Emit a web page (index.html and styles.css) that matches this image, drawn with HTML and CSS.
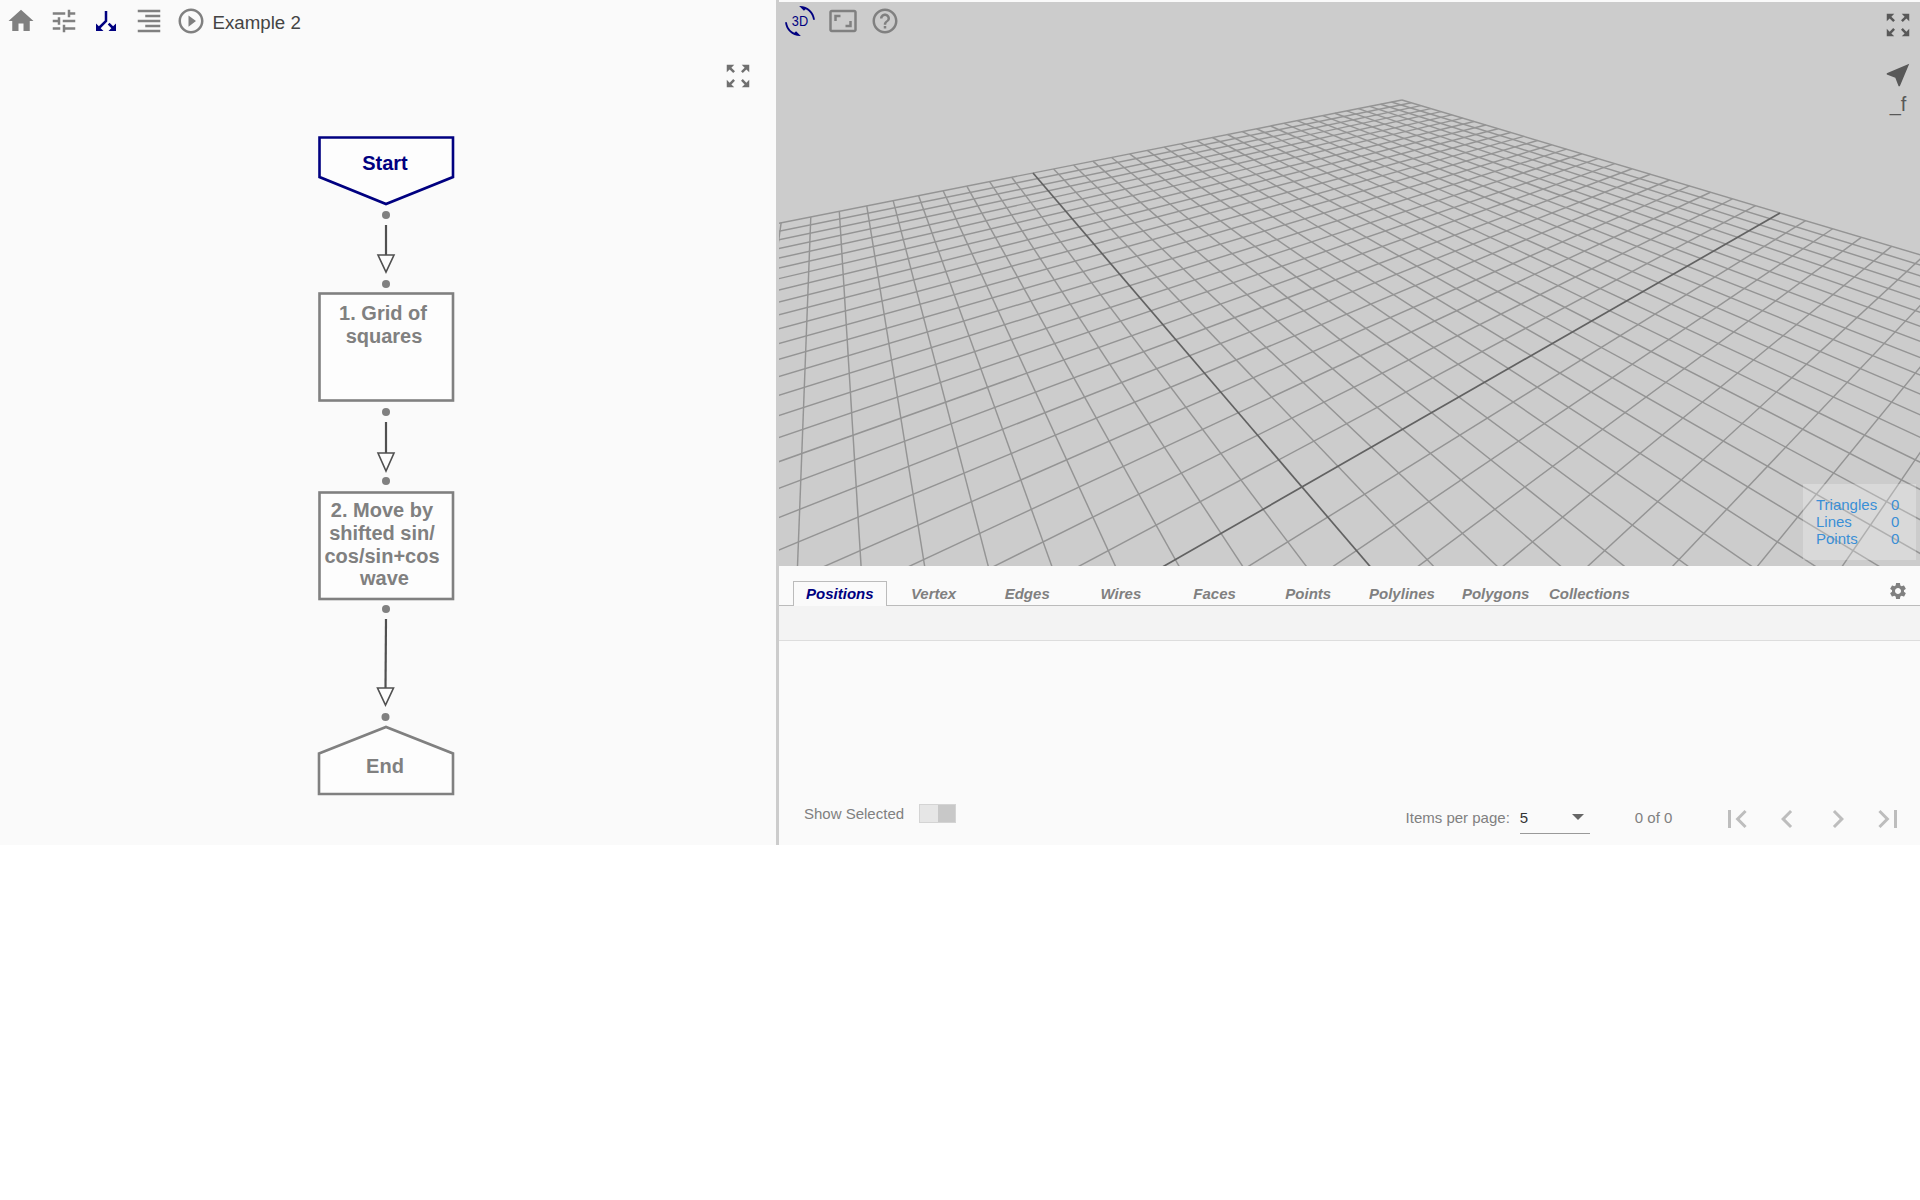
FILE: index.html
```html
<!DOCTYPE html>
<html lang="en">
<head>
<meta charset="utf-8">
<title>Example 2</title>
<link rel="stylesheet" href="styles.css">
</head>
<body>
<div class="app">
  <section class="flow-panel">
    <header class="toolbar">
      <span class="tool"><svg class="icon-30 grey" viewBox="0 0 24 24"><path d="M10 20v-6h4v6h5v-8h3L12 3 2 12h3v8z"/></svg></span>
      <span class="tool"><svg class="icon-30 grey" viewBox="0 0 24 24"><path d="M3 17v2h6v-2H3zM3 5v2h10V5H3zm10 16v-2h8v-2h-8v-2h-2v6h2zM7 9v2H3v2h4v2h2V9H7zm14 4v-2H11v2h10zm-6-4h2V7h4V5h-4V3h-2v6z"/></svg></span>
      <span class="tool"><svg class="icon-30 navy" viewBox="0 0 24 24"><path transform="matrix(1 0 0 -1 0 24)" d="M14 4l2.29 2.29-2.88 2.88 1.42 1.42 2.88-2.88L20 10V4zm-4 0H4v6l2.29-2.29 4.71 4.7V20h2v-8.41l-5.29-5.3z"/></svg></span>
      <span class="tool"><svg class="icon-30 grey" viewBox="0 0 24 24"><path d="M3 21h18v-2H3v2zm6-4h12v-2H9v2zm-6-4h18v-2H3v2zm6-4h12V7H9v2zM3 3v2h18V3H3z"/></svg></span>
      <span class="tool"><svg class="icon-30 grey" viewBox="0 0 24 24"><path d="M10 16.5l6-4.5-6-4.5v9zM12 2C6.48 2 2 6.48 2 12s4.48 10 10 10 10-4.48 10-10S17.52 2 12 2zm0 18c-4.41 0-8-3.59-8-8s3.59-8 8-8 8 3.59 8 8-3.59 8-8 8z"/></svg></span>
      <span class="title">Example 2</span>
    </header>
    <svg class="icon-30 grey flow-expand" viewBox="0 0 24 24"><path d="M15 3l2.3 2.3-2.89 2.87 1.42 1.42L18.7 6.7 21 9V3h-6zM3 9l2.3-2.3 2.87 2.89 1.42-1.42L6.7 5.3 9 3H3v6zm6 12l-2.3-2.3 2.89-2.87-1.42-1.42L5.3 17.3 3 15v6h6zm12-6l-2.3 2.3-2.87-2.89-1.42 1.42 2.89 2.87L15 21h6v-6z"/></svg>
    <svg class="flow" viewBox="0 0 776 845" width="776" height="845">
      <polygon class="node active" points="319.5,137.5 453,137.5 453,177 386,204 319.5,177"/>
      <text class="label active-label" x="385" y="170">Start</text>
      <circle class="dot" cx="386" cy="215" r="4"/>
      <line class="edge" x1="386" y1="225" x2="386" y2="256"/>
      <polygon class="head" points="378,255 394,255 386,272"/>
      <circle class="dot" cx="386" cy="284" r="4"/>

      <rect class="node" x="319.5" y="293.5" width="133.5" height="107"/>
      <text class="label" x="383" y="320">1. Grid of</text>
      <text class="label" x="384" y="343">squares</text>
      <circle class="dot" cx="386" cy="412" r="4"/>
      <line class="edge" x1="386" y1="422" x2="386" y2="454"/>
      <polygon class="head" points="378,453 394,453 386,471"/>
      <circle class="dot" cx="386" cy="481" r="4"/>

      <rect class="node" x="319.5" y="492.5" width="133.5" height="106.5"/>
      <text class="label" x="382" y="517">2. Move by</text>
      <text class="label" x="382" y="540">shifted sin/</text>
      <text class="label" x="382" y="563">cos/sin+cos</text>
      <text class="label" x="384.500" y="585">wave</text>
      <circle class="dot" cx="386" cy="609" r="4"/>
      <line class="edge" x1="386" y1="619" x2="385.500" y2="688"/>
      <polygon class="head" points="377.500,688 393.500,688 385.500,705"/>
      <circle class="dot" cx="385.500" cy="717" r="4"/>

      <polygon class="node" points="319,753.500 386,727 453,753.500 453,794 319,794"/>
      <text class="label" x="385" y="773">End</text>
    </svg>
  </section>

  <section class="side">
    <div class="viewer">
      <svg id="grid" class="grid" viewBox="779 2 1141 564"></svg>
      <div class="viewer-tools">
        <span class="rotate3d">
          <svg class="icon-30 navy" viewBox="0 0 24 24"><path d="M7.52 21.48C4.25 19.94 1.91 16.76 1.55 13H.05C.56 19.16 5.71 24 11.99 24l.66-.03-3.81-3.81-1.32 1.32zM12.01 0l-.66.03 3.81 3.81 1.33-1.33c3.27 1.55 5.61 4.72 5.96 8.48h1.5C23.44 4.84 18.29 0 12.01 0z"/></svg>
          <span class="rotate3d-text">3D</span>
        </span>
        <svg class="icon-30 grey" viewBox="0 0 24 24"><path d="M19 12h-2v3h-3v2h5v-5zM7 9h3V7H5v5h2V9zm14-6H3c-1.1 0-2 .9-2 2v14c0 1.1.9 2 2 2h18c1.1 0 2-.9 2-2V5c0-1.1-.9-2-2-2zm0 16.01H3V4.99h18v14.02z"/></svg>
        <svg class="icon-30 grey" viewBox="0 0 24 24"><path d="M11 18h2v-2h-2v2zm1-16C6.48 2 2 6.48 2 12s4.48 10 10 10 10-4.48 10-10S17.52 2 12 2zm0 18c-4.41 0-8-3.59-8-8s3.59-8 8-8 8 3.59 8 8-3.59 8-8 8zm0-14c-2.21 0-4 1.79-4 4h2c0-1.1.9-2 2-2s2 .9 2 2c0 2-3 1.75-3 5h2c0-2.25 3-2.5 3-5 0-2.21-1.79-4-4-4z"/></svg>
      </div>
      <div class="viewer-right">
        <svg class="icon-30 dark" viewBox="0 0 24 24"><path d="M15 3l2.3 2.3-2.89 2.87 1.42 1.42L18.7 6.7 21 9V3h-6zM3 9l2.3-2.3 2.87 2.89 1.42-1.42L6.7 5.3 9 3H3v6zm6 12l-2.3-2.3 2.89-2.87-1.42-1.42L5.3 17.3 3 15v6h6zm12-6l-2.3 2.3-2.87-2.89-1.42 1.42 2.89 2.87L15 21h6v-6z"/></svg>
        <svg class="icon-30 dark" viewBox="0 0 24 24"><path d="M21 3L3 10.53v.98l6.84 2.65L12.48 21h.98L21 3z"/></svg>
        <span class="sel-mode">_f</span>
      </div>
      <div class="stats">
        <span>Triangles</span><span>0</span>
        <span>Lines</span><span>0</span>
        <span>Points</span><span>0</span>
      </div>
    </div>

    <div class="data">
      <div class="tabs">
        <span class="tab selected">Positions</span>
        <span class="tab">Vertex</span>
        <span class="tab">Edges</span>
        <span class="tab">Wires</span>
        <span class="tab">Faces</span>
        <span class="tab">Points</span>
        <span class="tab">Polylines</span>
        <span class="tab">Polygons</span>
        <span class="tab">Collections</span>
        <svg class="gear" viewBox="0 0 24 24"><path d="M19.14 12.94c.04-.3.06-.61.06-.94 0-.32-.02-.64-.07-.94l2.03-1.58c.18-.14.23-.41.12-.61l-1.92-3.32c-.12-.22-.37-.29-.59-.22l-2.39.96c-.5-.38-1.03-.7-1.62-.94l-.36-2.54c-.04-.24-.24-.41-.48-.41h-3.84c-.24 0-.43.17-.47.41l-.36 2.54c-.59.24-1.13.57-1.62.94l-2.39-.96c-.22-.08-.47 0-.59.22L2.74 8.87c-.12.21-.08.47.12.61l2.03 1.58c-.05.3-.09.63-.09.94s.02.64.07.94l-2.03 1.58c-.18.14-.23.41-.12.61l1.92 3.32c.12.22.37.29.59.22l2.39-.96c.5.38 1.03.7 1.62.94l.36 2.54c.05.24.24.41.48.41h3.84c.24 0 .44-.17.47-.41l.36-2.54c.59-.24 1.13-.56 1.62-.94l2.39.96c.22.08.47 0 .59-.22l1.92-3.32c.12-.22.07-.47-.12-.61l-2.01-1.58zM12 15.6c-1.98 0-3.6-1.62-3.6-3.6s1.62-3.6 3.6-3.6 3.6 1.62 3.6 3.6-1.62 3.6-3.6 3.6z"/></svg>
      </div>
      <div class="table-head"></div>
      <footer class="footer">
        <div class="show-selected">
          <span>Show Selected</span>
          <span class="toggle"><i></i><b></b></span>
        </div>
        <div class="paginator">
          <span class="per-page">Items per page:</span>
          <span class="select"><span>5</span><i class="caret"></i></span>
          <span class="range">0 of 0</span>
          <span class="page-btn"><svg viewBox="0 0 24 24"><path d="M18.41 16.59L13.82 12l4.59-4.59L17 6l-6 6 6 6zM6 6h2v12H6z"/></svg></span>
          <span class="page-btn"><svg viewBox="0 0 24 24"><path d="M15.41 7.41L14 6l-6 6 6 6 1.41-1.41L10.83 12z"/></svg></span>
          <span class="page-btn"><svg viewBox="0 0 24 24"><path d="M10 6L8.59 7.41 13.17 12l-4.58 4.59L10 18l6-6z"/></svg></span>
          <span class="page-btn"><svg viewBox="0 0 24 24"><path d="M5.59 7.41L10.18 12l-4.59 4.59L7 18l6-6-6-6zM16 6h2v12h-2z"/></svg></span>
        </div>
      </footer>
    </div>
  </section>
</div>
<script src="grid.js"></script>
</body>
</html>
```
FILE: styles.css
```css
* { box-sizing: border-box; }
html, body { margin: 0; background: #fff; }
body { font-family: "Liberation Sans", Arial, sans-serif; color: #808080; }

.app {
  display: grid;
  grid-template-columns: 776px 1fr;
  height: 845px;
  background: #fafafa;
}

.icon-30 { width: 30px; height: 30px; display: block; fill: currentColor; flex: none; }
.grey { color: #808080; }
.navy { color: #000080; }
.dark { color: #585858; }

.flow-panel { position: relative; overflow: hidden; }
.toolbar { display: flex; align-items: center; height: 40px; padding: 1px 0 0 0; }
.tool { width: 42.5px; display: flex; justify-content: center; }
.title { font-size: 18.7px; color: #444; padding-top: 5px; }
.flow-expand { position: absolute; left: 723px; top: 61px; color: #707070; }
.flow { position: absolute; left: 0; top: 0; }

.node { fill: #fdfdfd; stroke: #808080; stroke-width: 2.6; }
.node.active { stroke: #000080; }
.label { font-size: 20px; font-weight: 700; fill: #808080; text-anchor: middle; }
.active-label { fill: #000080; }
.dot { fill: #808080; }
.edge { stroke: #505050; stroke-width: 2.2; }
.head { fill: #fdfdfd; stroke: #505050; stroke-width: 1.6; }

.side {
  display: flex;
  flex-direction: column;
  border-left: 3px solid #ccc;
  padding-top: 2px;
  min-width: 0;
}

.viewer { position: relative; height: 564px; background: #ccc; overflow: hidden; flex: none; }
.grid { display: block; width: 100%; height: 100%; }
.grid line { stroke: #949494; stroke-width: 1.45; }
.grid line.axis { stroke: #626262; stroke-width: 1.7; }

.viewer-tools { position: absolute; left: 6px; top: 4px; display: flex; gap: 12.5px; }
.rotate3d { position: relative; display: block; width: 30px; height: 30px; }
.rotate3d-text {
  position: absolute; left: 0; right: 0; top: 8px;
  text-align: center; font-size: 14.5px; line-height: 14px; color: #000080;
  transform: scaleX(.88);
}
.viewer-right {
  position: absolute; right: 7px; top: 8px;
  display: flex; flex-direction: column; align-items: center; gap: 20px;
}
.sel-mode { font-size: 20px; line-height: 22px; color: #585858; margin-top: -17px; }

.stats {
  position: absolute; right: 4px; bottom: 6px;
  width: 113px; height: 76px; padding: 12px 0 0 13px;
  display: grid; grid-template-columns: 75px 1fr; grid-auto-rows: 17px;
  font-size: 15px; line-height: 17px; color: #3a8fd6;
  background: rgba(255, 255, 255, .25);
}

.data { flex: 1; display: flex; flex-direction: column; min-height: 0; }
.tabs {
  display: flex; align-items: flex-end;
  height: 40px; padding: 15px 0 0 14px;
  border-bottom: 1px solid #bbb;
}
.tab {
  width: 93.7px; height: 24px; text-align: center;
  font-size: 15px; line-height: 25px; font-weight: 700; font-style: italic;
  color: #808080;
}
.tab.selected {
  color: #000080; background: #fafafa;
  border: 1px solid #bbb; border-bottom: 0;
  height: 25px; margin-bottom: -1px; line-height: 23px;
}
.gear { width: 20px; height: 20px; fill: #808080; margin: 0 12px 4px auto; align-self: center; flex: none; }
.table-head { height: 35px; background: #f3f3f3; border-bottom: 1px solid #ddd; flex: none; }

.footer {
  margin-top: auto; height: 60px; padding: 0 7px 0 25px;
  display: flex; justify-content: space-between; align-items: center;
  font-size: 15px;
}
.show-selected { display: flex; align-items: center; gap: 15px; margin-top: -3px; }
.toggle { display: flex; width: 37px; height: 19px; border: 1px solid #d4d4d4; }
.toggle i { flex: 1; background: #e6e6e6; }
.toggle b { flex: 1; background: #c8c8c8; }

.paginator { display: flex; align-items: center; margin-top: 3px; }
.per-page { margin-top: 2px; }
.select {
  display: flex; align-items: center; justify-content: space-between;
  width: 70px; height: 34px; margin-left: 10px; padding: 2px 6px 0 0;
  border-bottom: 1px solid #999; color: #333;
}
.caret { width: 0; height: 0; border: 6px solid transparent; border-top: 6px solid #666; border-bottom: 0; }
.range { margin-left: 45px; margin-top: 2px; width: 77px; }
.page-btn { width: 50.300px; display: flex; justify-content: center; margin-top: 4px; }
.page-btn svg { width: 36px; height: 36px; fill: #bdbdbd; display: block; }
```
FILE: grid.js
```js
// Draws the ground-plane grid of the 3D viewer through a perspective mapping.
(function () {
  var svg = document.getElementById('grid');
  var NS = 'http://www.w3.org/2000/svg';
  var N = 25;
  var g = 0.955, h = 1.274;
  var ax = 1780 * (g + 1) - 1302, ay = 213 * (g + 1) - 487;
  var bx = 1033 * (h + 1) - 1302, by = 173 * (h + 1) - 487;
  var cx = 1302, cy = 487;
  var MIN_W = 0.03;

  function project(u, v) {
    var w = g * u + h * v + 1;
    return [(ax * u + bx * v + cx) / w, (ay * u + by * v + cy) / w];
  }

  function segment(u0, v0, u1, v1, axis) {
    var w0 = g * u0 + h * v0 + 1, w1 = g * u1 + h * v1 + 1;
    if (w0 < MIN_W && w1 < MIN_W) return;
    if (w0 < MIN_W) { var t = (MIN_W - w0) / (w1 - w0); u0 += (u1 - u0) * t; v0 += (v1 - v0) * t; }
    if (w1 < MIN_W) { var s = (MIN_W - w1) / (w0 - w1); u1 += (u0 - u1) * s; v1 += (v0 - v1) * s; }
    var a = project(u0, v0), b = project(u1, v1);
    var l = document.createElementNS(NS, 'line');
    l.setAttribute('x1', a[0]); l.setAttribute('y1', a[1]);
    l.setAttribute('x2', b[0]); l.setAttribute('y2', b[1]);
    if (axis) l.setAttribute('class', 'axis');
    svg.appendChild(l);
  }

  var i, t;
  for (i = -N; i <= N; i++) {
    if (i === 0) continue;
    t = i / N;
    segment(t, -1, t, 1, false);
    segment(-1, t, 1, t, false);
  }
  segment(0, -1, 0, 1, true);
  segment(-1, 0, 1, 0, true);
})();
```
